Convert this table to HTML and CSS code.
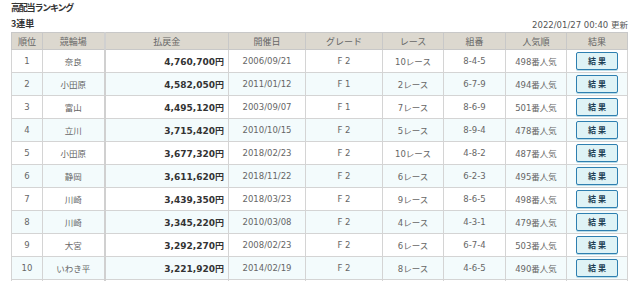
FILE: index.html
```html
<!DOCTYPE html>
<html lang="ja">
<head>
<meta charset="utf-8">
<link rel="stylesheet" href="styles.css">
</head>
<body>
<div class="wrap">
  <h1 class="title">高配当ランキング</h1>
  <div class="subhead">
    <span class="kind">3連単</span>
    <span class="updated">2022/01/27 00:40 更新</span>
  </div>
  <table class="rank">
    <colgroup>
      <col class="c1"><col class="c2"><col class="c3"><col class="c4"><col class="c5"><col class="c6"><col class="c7"><col class="c8"><col class="c9">
    </colgroup>
    <thead>
      <tr><th>順位</th><th>競輪場</th><th>払戻金</th><th>開催日</th><th>グレード</th><th>レース</th><th>組番</th><th>人気順</th><th>結果</th></tr>
    </thead>
    <tbody>
      <tr><td>1</td><td>奈良</td><td class="amt">4,760,700円</td><td>2006/09/21</td><td>F 2</td><td>10レース</td><td>8-4-5</td><td>498番人気</td><td><span class="btn">結 果</span></td></tr>
      <tr class="alt"><td>2</td><td>小田原</td><td class="amt">4,582,050円</td><td>2011/01/12</td><td>F 1</td><td>2レース</td><td>6-7-9</td><td>494番人気</td><td><span class="btn">結 果</span></td></tr>
      <tr><td>3</td><td>富山</td><td class="amt">4,495,120円</td><td>2003/09/07</td><td>F 1</td><td>7レース</td><td>8-6-9</td><td>501番人気</td><td><span class="btn">結 果</span></td></tr>
      <tr class="alt"><td>4</td><td>立川</td><td class="amt">3,715,420円</td><td>2010/10/15</td><td>F 2</td><td>5レース</td><td>8-9-4</td><td>478番人気</td><td><span class="btn">結 果</span></td></tr>
      <tr><td>5</td><td>小田原</td><td class="amt">3,677,320円</td><td>2018/02/23</td><td>F 2</td><td>10レース</td><td>4-8-2</td><td>487番人気</td><td><span class="btn">結 果</span></td></tr>
      <tr class="alt"><td>6</td><td>静岡</td><td class="amt">3,611,620円</td><td>2018/11/22</td><td>F 2</td><td>6レース</td><td>6-2-3</td><td>495番人気</td><td><span class="btn">結 果</span></td></tr>
      <tr><td>7</td><td>川崎</td><td class="amt">3,439,350円</td><td>2018/03/23</td><td>F 2</td><td>9レース</td><td>8-6-5</td><td>498番人気</td><td><span class="btn">結 果</span></td></tr>
      <tr class="alt"><td>8</td><td>川崎</td><td class="amt">3,345,220円</td><td>2010/03/08</td><td>F 2</td><td>4レース</td><td>4-3-1</td><td>479番人気</td><td><span class="btn">結 果</span></td></tr>
      <tr><td>9</td><td>大宮</td><td class="amt">3,292,270円</td><td>2008/02/23</td><td>F 2</td><td>6レース</td><td>6-7-4</td><td>503番人気</td><td><span class="btn">結 果</span></td></tr>
      <tr class="alt"><td>10</td><td>いわき平</td><td class="amt">3,221,920円</td><td>2014/02/19</td><td>F 2</td><td>8レース</td><td>4-6-5</td><td>490番人気</td><td><span class="btn">結 果</span></td></tr>
      <tr class="peek"><td></td><td></td><td></td><td></td><td></td><td></td><td></td><td></td><td><span class="btn btn-empty"></span></td></tr>
    </tbody>
  </table>
</div>
</body>
</html>
```

FILE: styles.css
```css
html, body {
  margin: 0;
  padding: 0;
  background: #fff;
}
body {
  font-family: "DejaVu Sans", "Noto Sans CJK JP", sans-serif;
  font-size: 9px;
  color: #555;
  overflow: hidden;
  height: 281px;
}
.wrap {
  padding: 0 13px 0 11px;
}
.title {
  margin: 0;
  padding-top: 1px;
  font-size: 9px;
  letter-spacing: -1.2px;
  font-weight: bold;
  color: #333;
  line-height: 13px;
  font-family: "Noto Sans CJK JP", sans-serif;
}
.subhead {
  display: flex;
  justify-content: space-between;
  align-items: flex-end;
  margin-top: 2px;
  height: 15px;
}
.kind {
  font-family: "Noto Sans CJK JP", sans-serif;
  font-weight: bold;
  font-size: 9px;
  color: #333;
  line-height: 13px;
  margin-bottom: 1px;
}
.updated {
  font-size: 8.5px;
  color: #555;
  line-height: 13px;
  margin-bottom: -1px;
  margin-right: -1px;
}
.rank {
  border-collapse: collapse;
  width: 616px;
  table-layout: fixed;
  margin-top: 1px;
}
col.c1 { width: 31px; }
col.c2 { width: 62px; }
col.c3 { width: 124px; }
col.c4 { width: 77px; }
col.c5 { width: 77px; }
col.c6 { width: 61px; }
col.c7 { width: 62px; }
col.c8 { width: 61px; }
col.c9 { width: 61px; }
.rank th {
  background: #dcd8cf;
  color: #666;
  font-weight: normal;
  font-size: 9px;
  height: 16px;
  padding: 0;
  border: 1px solid #c8c8c8;
  text-align: center;
  font-family: "Noto Sans CJK JP", sans-serif;
}
.rank td {
  height: 22px;
  padding: 0;
  border: 1px solid #d4d4d4;
  border-top-color: #e0e0e0;
  text-align: center;
  color: #666;
  font-size: 8.5px;
}
.rank td:nth-child(3), .rank th:nth-child(3) {
  border-left: 2px solid #d0d0d0;
}
.rank tr.alt td {
  background: #f3fbfc;
}
.rank td.amt {
  text-align: right;
  padding-right: 4px;
  font-weight: bold;
  color: #333;
  font-size: 9px;
}
.btn {
  display: inline-block;
  width: 40px;
  height: 16px;
  line-height: 16px;
  border: 1px solid #2e7fb0;
  border-radius: 2px;
  background: #dff3f6;
  color: #1d3f55;
  font-weight: bold;
  font-size: 8px;
  font-family: "Noto Sans CJK JP", sans-serif;
  vertical-align: middle;
  box-shadow: 0 1px 0 #b9dce8;
}
```
